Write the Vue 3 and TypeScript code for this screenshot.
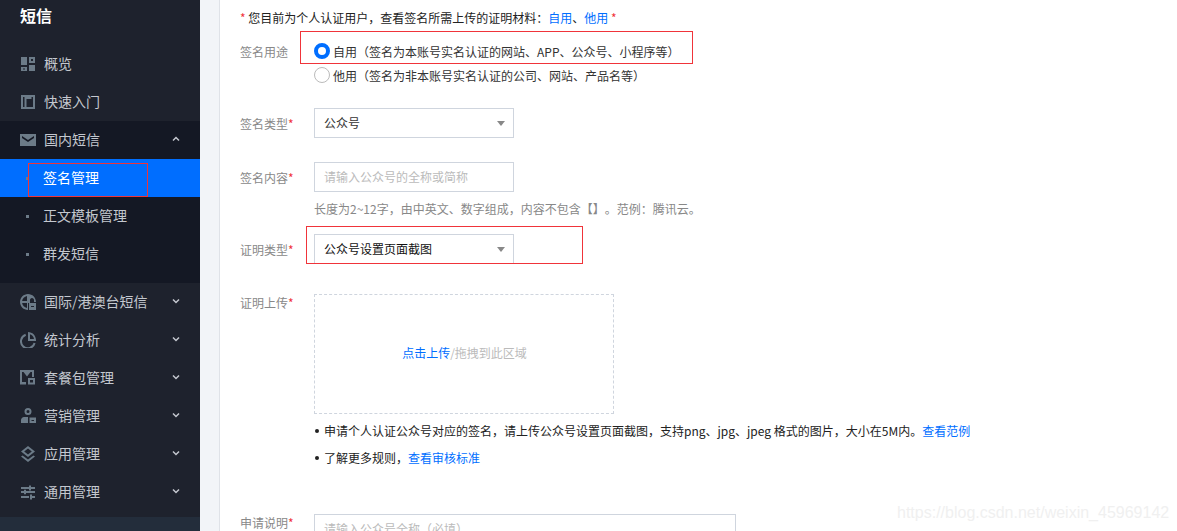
<template>
  <div class="page">
    <aside class="sidebar">
      <div class="brand">短信</div>
      <ul class="menu">
        <li v-for="item in topItems" :key="item.name" class="menu-item">
          <svg class="icon" :viewBox="item.box || '0 0 16 16'">
            <path :d="item.fill" class="icon-fill" fill-rule="evenodd" />
          </svg>
          <span>{{ item.name }}</span>
        </li>
      </ul>
      <ul class="menu open">
        <li class="menu-item">
          <svg class="icon" viewBox="0 -2 16 16">
            <path d="M0 0H16V12H0ZM2 2 8 6 14 2V4L8 8 2 4Z" class="icon-fill" fill-rule="evenodd" />
          </svg>
          <span>国内短信</span>
          <svg class="chevron" viewBox="0 0 8 6"><path d="M1 4.5 4 1.5 7 4.5" /></svg>
        </li>
        <li
          v-for="sub in subItems"
          :key="sub"
          class="menu-item sub"
          :class="{ active: sub === '签名管理' }"
        >
          <i class="dot"></i>
          <span>{{ sub }}</span>
        </li>
      </ul>
      <ul class="menu">
        <li v-for="item in bottomItems" :key="item.name" class="menu-item">
          <svg class="icon" :viewBox="item.box || '0 0 16 16'">
            <path :d="item.fill" class="icon-fill" fill-rule="evenodd" />
            <path v-if="item.stroke" :d="item.stroke" class="icon-stroke" />
          </svg>
          <span>{{ item.name }}</span>
          <svg class="chevron" viewBox="0 0 8 6"><path d="M1 1.5 4 4.5 7 1.5" /></svg>
        </li>
      </ul>
      <div class="sidebar-foot"></div>
      <div class="mark mark-menu"></div>
    </aside>

    <div class="gutter"></div>

    <main class="content">
      <p class="notice">
        <em>*</em> 您目前为个人认证用户，查看签名所需上传的证明材料：<a>自用</a>、<a>他用</a> <em>*</em>
      </p>

      <div class="row usage">
        <label class="label">签名用途</label>
        <div class="radios">
          <div class="radio-line"><i class="radio checked"></i>自用（签名为本账号实名认证的网站、APP、公众号、小程序等）</div>
          <div class="radio-line"><i class="radio"></i>他用（签名为非本账号实名认证的公司、网站、产品名等）</div>
        </div>
        <div class="mark mark-usage"></div>
      </div>

      <div class="row type">
        <label class="label">签名类型<em>*</em></label>
        <div class="select">公众号<i class="caret"></i></div>
      </div>

      <div class="row name">
        <label class="label">签名内容<em>*</em></label>
        <div class="input placeholder">请输入公众号的全称或简称</div>
      </div>
      <p class="help">长度为2~12字，由中英文、数字组成，内容不包含【】。范例：腾讯云。</p>

      <div class="row proof">
        <label class="label">证明类型<em>*</em></label>
        <div class="select strong">公众号设置页面截图<i class="caret"></i></div>
        <div class="mark mark-proof"></div>
      </div>

      <div class="row upload-row">
        <label class="label">证明上传<em>*</em></label>
        <div class="upload"><a>点击上传</a>/拖拽到此区域</div>
      </div>

      <ul class="rules">
        <li>申请个人认证公众号对应的签名，请上传公众号设置页面截图，支持png、jpg、jpeg 格式的图片，大小在5M内。<a>查看范例</a></li>
        <li>了解更多规则，<a>查看审核标准</a></li>
      </ul>

      <div class="row remark">
        <label class="label">申请说明<em>*</em></label>
        <div class="input wide placeholder">请输入公众号全称（必填）</div>
      </div>

      <div class="watermark">https://blog.csdn.net/weixin_45969142</div>
    </main>
  </div>
</template>

<script setup lang="ts">
interface MenuItem {
  name: string;
  fill: string;
  stroke?: string;
  box?: string;
}

const topItems: MenuItem[] = [
  {
    name: "概览",
    box: "0 -1 16 16",
    fill: "M1 0H7V8H1ZM9 0H15V6H9ZM11 2V4H13V2ZM9 8H15V14H9ZM1 10H7V14H1ZM3 11.5V12.5H5V11.5Z",
  },
  {
    name: "快速入门",
    box: "0 -1 16 16",
    fill: "M1 0H15V14H1ZM3 2V12H4.5V2ZM6.5 2V12H13V2ZM6.5 2H11.5V4H6.5Z",
  },
];

const subItems = ["签名管理", "正文模板管理", "群发短信"];

const bottomItems: MenuItem[] = [
  {
    name: "国际/港澳台短信",
    fill: "M8 0C3.6 0 0 3.6 0 8S3.6 16 8 16V9H10V6C10 5 10.8 4 12 4S14 5 14 6V8H16C16 3.6 12.4 0 8 0ZM7 2V7H2.1C2.5 4.4 4.4 2.5 7 2ZM2.1 9H7V14C4.4 13.5 2.5 11.6 2.1 9ZM9 9H16V16H9ZM11 12V13H14V12Z",
  },
  {
    name: "统计分析",
    fill: "M8 0C12.4 0 16 3.6 16 8V9H8ZM10 2.3V7H14C13.6 4.6 12.2 3 10 2.3Z",
    stroke: "M5.7 2.8A6.9 6.9 0 1 0 14.6 11",
  },
  {
    name: "套餐包管理",
    fill: "M0 0H14V7H12V2H10.5L7 6.5 3.5 2H2V12H6V14.5H0ZM8 8H15V14.5H8ZM10 10V12.5H13V10Z",
  },
  {
    name: "营销管理",
    fill: "M8 0A3.5 3.5 0 1 1 8 7 3.5 3.5 0 0 1 8 0ZM8 2A1.5 1.5 0 1 0 8 5 1.5 1.5 0 0 0 8 2ZM4 9H8V15H1V12C1 10.5 2.5 9 4 9ZM9.5 9.5H16V15H9.5ZM11.5 12V13H14V12Z",
  },
  {
    name: "应用管理",
    fill: "M8 0 15 5.5 8 11 1 5.5ZM8 2.6 4.2 5.5 8 8.4 11.8 5.5ZM2.6 9.4 8 13.4 13.4 9.4 15 10.6 8 16 1 10.6Z",
  },
  {
    name: "通用管理",
    box: "0 -1 16 16",
    fill: "M1 2H9V0.5H11V2H15V4H11V5.5H9V4H1ZM1 6H4V4.8H6V6H15V8H6V9.2H4V8H1ZM1 11H9V13H1ZM10 9.5H12V11H15V13H12V14.5H10Z",
  },
];
</script>

<style>
html,
body {
  margin: 0;
  height: 100%;
  overflow: hidden;
  background: #fff;
}
</style>

<style scoped>
.page {
  display: flex;
  height: 531px;
  overflow: hidden;
  font-family: "Noto Sans CJK SC", "Liberation Sans", sans-serif;
  font-size: 12px;
  color: #222;
  text-spacing-trim: space-all;
}

.sidebar {
  position: relative;
  display: flex;
  flex-direction: column;
  flex: 0 0 200px;
  background: #1e222d;
  color: #c4c8cf;
  font-size: 14px;
}
.brand {
  height: 45px;
  line-height: 30px;
  padding-left: 20px;
  font-size: 16px;
  font-weight: 700;
  color: #fff;
}
.menu {
  list-style: none;
  margin: 0;
  padding: 0;
}
.menu.open {
  height: 162px;
  background: #141824;
}
.menu-item {
  display: flex;
  align-items: center;
  height: 38px;
  padding-left: 20px;
}
.menu-item span {
  margin-top: -2px;
}
.icon {
  flex: none;
  width: 16px;
  height: 16px;
  margin-right: 8px;
}
.icon-fill {
  fill: #6c7b88;
}
.icon-stroke {
  fill: none;
  stroke: #6c7b88;
  stroke-width: 2;
}
.chevron {
  position: absolute;
  left: 172px;
  width: 8px;
  height: 6px;
  margin-top: -2px;
  fill: none;
  stroke: #c4c8cf;
  stroke-width: 1.5;
}
.sub {
  padding-left: 26px;
}
.sub.active {
  background: #006eff;
  color: #fff;
}
.dot {
  width: 3px;
  height: 3px;
  margin-right: 14px;
  background: #6c7b88;
}
.sidebar-foot {
  flex: 1;
  margin-top: 6px;
  background: #232d3b;
}

.mark {
  position: absolute;
  border: 1px solid #f0343a;
  box-sizing: border-box;
  pointer-events: none;
}
.mark-menu {
  left: 28px;
  top: 163px;
  width: 120px;
  height: 34px;
}
.mark-usage {
  left: 60px;
  top: -8px;
  width: 393px;
  height: 33px;
}
.mark-proof {
  left: 66px;
  top: -8px;
  width: 277px;
  height: 38px;
}

.gutter {
  flex: 0 0 19px;
  background: #f2f4f8;
  border-right: 1px solid #dfe2e8;
}

.content {
  position: relative;
  flex: 1;
  padding: 8px 0 0 20px;
  min-width: 0;
}
em {
  font-style: normal;
  color: #f0343a;
}
a {
  color: #006eff;
}
.notice {
  margin: 0;
  line-height: 20px;
}
.row {
  position: relative;
  display: flex;
  align-items: center;
}
.label {
  flex: 0 0 74px;
  color: #888;
}
.usage {
  margin-top: 11px;
  align-items: flex-start;
}
.usage .label {
  line-height: 26px;
}
.radio-line {
  display: flex;
  align-items: center;
  height: 24px;
  color: #333;
}
.radio {
  box-sizing: border-box;
  width: 16px;
  height: 16px;
  margin-right: 3px;
  border: 1px solid #bbb;
  border-radius: 50%;
}
.radio.checked {
  border: 4px solid #006eff;
}
.type {
  margin-top: 21px;
}
.name {
  margin-top: 24px;
}
.proof {
  margin-top: 16px;
}
.select,
.input {
  box-sizing: border-box;
  position: relative;
  width: 200px;
  height: 30px;
  line-height: 28px;
  padding-left: 9px;
  border: 1px solid #cfd5de;
  color: #333;
}
.select.strong {
  color: #111;
}
.input.wide {
  width: 422px;
}
.input.placeholder {
  color: #bbb;
}
.caret {
  position: absolute;
  right: 8px;
  top: 12px;
  border-left: 4px solid transparent;
  border-right: 4px solid transparent;
  border-top: 5px solid #888;
}
.help {
  margin: 8px 0 0 74px;
  line-height: 18px;
  color: #888;
}
.upload-row {
  margin-top: 30px;
  align-items: flex-start;
}
.upload-row .label,
.remark .label {
  line-height: 18px;
}
.upload {
  box-sizing: border-box;
  display: flex;
  align-items: center;
  justify-content: center;
  width: 300px;
  height: 120px;
  padding: 0 0 3px 1px;
  border: 1px dashed #cfd5de;
  color: #bbb;
}
.rules {
  list-style: none;
  margin: 7px 0 0 74px;
  padding: 0 0 0 10px;
}
.rules li {
  position: relative;
  line-height: 20px;
  white-space: nowrap;
}
.rules li + li {
  margin-top: 7px;
}
.rules li::before {
  content: "";
  position: absolute;
  left: -9px;
  top: 8px;
  width: 4px;
  height: 4px;
  border-radius: 50%;
  background: #222;
}
.remark {
  margin-top: 46px;
  align-items: flex-start;
}
.watermark {
  position: absolute;
  left: 677px;
  top: 502px;
  font-family: "Liberation Sans", sans-serif;
  font-size: 16px;
  line-height: 22px;
  color: #f0f0f0;
  white-space: nowrap;
}
</style>
